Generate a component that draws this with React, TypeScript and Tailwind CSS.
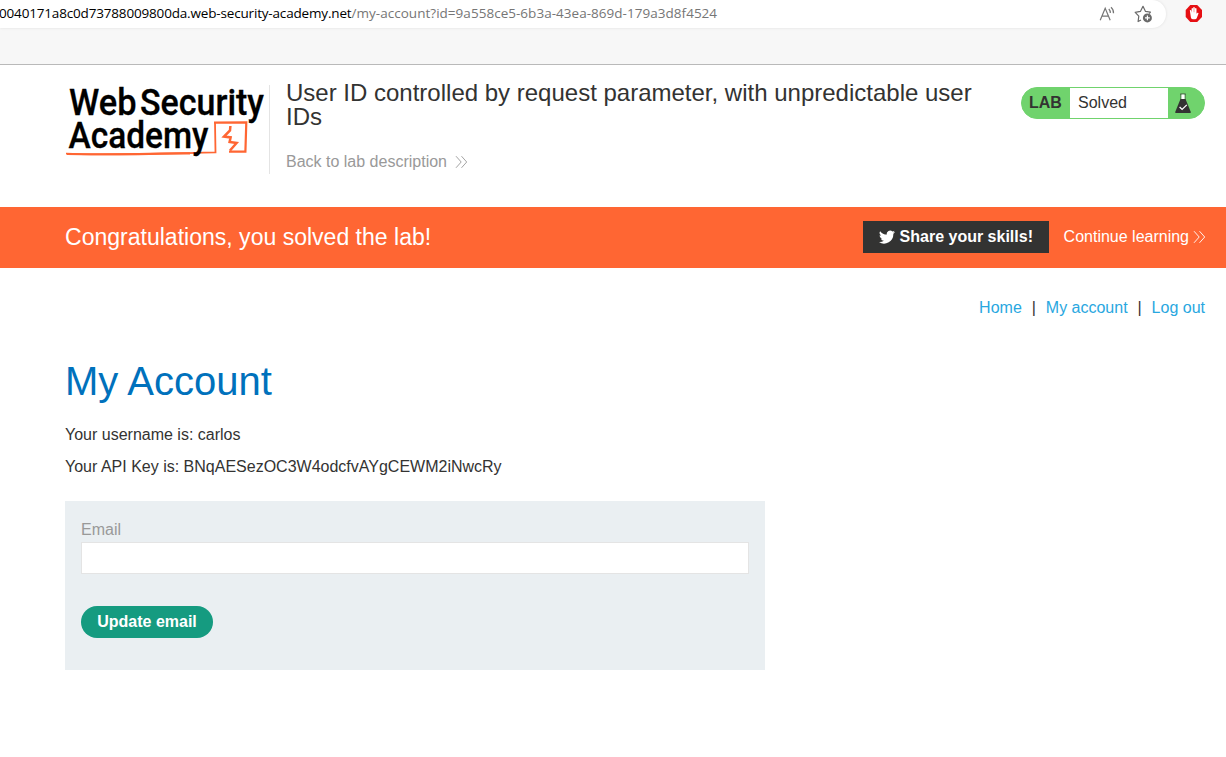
import React from "react";

function Chevrons({ className }: { className: string }) {
  return (
    <svg className={className} width="13" height="14" viewBox="0 0 13 14" fill="none" stroke="currentColor" strokeWidth="0.9">
      <path d="M1 1.2 6.2 7 1 12.8M6.5 1.2 11.7 7 6.5 12.8" />
    </svg>
  );
}

function Logo() {
  return (
    <svg className="block overflow-visible" width="205" height="80" viewBox="65 85 205 80" fontFamily="Roboto, sans-serif" fontWeight="500" fontSize="37.5">
      <g fill="none" stroke="#ff6633">
        <path d="M66 153.6 C100 155.6 160 153.6 215.5 152.4 L215 122.4" strokeWidth="1.8" />
        <path d="M67 154 C110 154.8 150 154 190 153.3" strokeWidth="2.2" />
        <path d="M214 122.6 L246.3 122.4 L245.4 151.6 L229 151.6" strokeWidth="2.2" />
        <path d="M230.4 126 L230 130.5 L224 136.6 L230.6 137.4 L229.6 142 L236.6 143 L230 150.5" strokeWidth="2.5" />
      </g>
      <g fill="#000" stroke="#000" strokeWidth="0.3">
        <text x="69" y="115.2" textLength="67.5" lengthAdjust="spacingAndGlyphs">Web</text>
        <text x="140" y="115.2" textLength="124" lengthAdjust="spacingAndGlyphs">Security</text>
        <text x="68.5" y="148" textLength="140" lengthAdjust="spacingAndGlyphs">Academy</text>
      </g>
    </svg>
  );
}

function BrowserBar() {
  return (
    <div className="flex h-[65px] items-start border-b border-[#b9b9b9] bg-[#f7f7f7]">
      <div className="flex h-7 w-[1166px] items-center rounded-br-[14px] rounded-tr-[14px] bg-white shadow-[0_0_3px_rgba(0,0,0,0.1)]">
        <div className="-ml-px mt-[-2px] w-[1100px] whitespace-nowrap font-['Open_Sans','Noto_Sans',sans-serif] text-[13.5px] leading-[26px] text-[#767676]">
          <span className="inline-block tracking-[-0.17px] text-black">0040171a8c0d73788009800da.web-security-academy.net</span>
          <span className="inline-block tracking-[0.03px]">/my-account?id=9a558ce5-6b3a-43ea-869d-179a3d8f4524</span>
        </div>
        <svg className="-mt-px shrink-0" width="17" height="18" viewBox="0 0 17 18" fill="none" stroke="#767676" strokeWidth="1.2">
          <path d="M1.2 15.2 6.2 3.2l5 12M3 11.2h6.4M9.8 4q1.6 1.6 1.5 4M12 2.3q2.8 2.4 2.5 6" />
        </svg>
        <svg className="-mt-px ml-[18px] shrink-0" width="20" height="20" viewBox="0 0 20 20" fill="none" stroke="#696969" strokeWidth="1.2" strokeLinejoin="round">
          <path d="M7 16 4.1 17.5 4.8 12.1 1.2 8.3 6.4 7.4 9 2.3 11.5 7.4 16.4 8.1 15.2 9.6" />
          <circle cx="13.4" cy="13.9" r="4.5" fill="#696969" stroke="none" />
          <path d="M13.4 11.5v4.8M11 13.9h4.8" stroke="white" />
        </svg>
      </div>
      <svg className="ml-[19px] mt-[5px]" width="18" height="17" viewBox="0 0 18 17">
        <path d="M5.3 0h6.9L17 5v7l-4.8 5H5.3L.7 12V5Z" fill="#e60f13" />
        <path d="M4.8 5.2q.9-.7 1.4.2l.4 2.3V3.5q.7-1.1 1.4 0v3.8h.2V2.5q.8-1.2 1.6 0v4.8h.2V3.5q.8-1 1.5 0v5.2l1-1q1.1-.2 1 .8l-1.7 4.5q-.5 1.3-1.8 1.3H7.8q-1.7 0-1.9-1.8Z" fill="white" />
      </svg>
    </div>
  );
}

export default function App() {
  return (
    <div className="h-[757px] w-[1226px] overflow-hidden bg-white font-['Liberation_Sans',Arial,sans-serif] text-base text-[#333332]">
      <BrowserBar />
      <header className="flex h-[142px] pl-[65px] pr-[21px] pt-5">
        <div className="h-[89px] w-[205px] shrink-0 border-r border-[#e4e4e4]">
          <Logo />
        </div>
        <div className="ml-4 w-[700px] shrink-0">
          <h2 className="mt-[-4px] text-[24px] leading-6">User ID controlled by request parameter, with unpredictable user IDs</h2>
          <a className="mt-[21px] flex items-center text-[#999]">
            Back to lab description
            <Chevrons className="ml-2" />
          </a>
        </div>
        <div className="ml-auto mt-[2px] flex h-8 w-[184px] overflow-hidden rounded-full border border-[#70d36d] bg-[#70d36d] leading-[30px]">
          <span className="w-12 pl-[7px] font-bold">LAB</span>
          <span className="w-[98px] bg-white pl-2">Solved</span>
          <svg className="ml-[6px] mt-[5px]" width="18" height="21" viewBox="0 0 18 21">
            <path d="M6.3 1h5.4M7 1v6M11 1v6" stroke="#333332" strokeWidth="0.8" />
            <path d="M7.4 1.5h3.2V6H7.4Z" fill="white" />
            <path d="M6.5 6h5l5.3 13q.3 1-.8 1H2q-1.1 0-.8-1Z" fill="#333332" />
            <path d="m5.6 14 2.5 2.4 4.7-4.5" fill="none" stroke="white" strokeWidth="1.3" />
          </svg>
        </div>
      </header>
      <section className="flex h-[61px] items-center bg-[#ff6633] pb-[2px] pl-[65px] pr-5 text-white">
        <h4 className="text-[23.04px] leading-6">Congratulations, you solved the lab!</h4>
        <button className="ml-auto flex h-8 w-[186px] items-center bg-[#333332] pl-4 font-bold">
          <svg width="16" height="16" viewBox="0 0 24 24" fill="white">
            <path d="M24 4.6a10 10 0 0 1-2.8.8 5 5 0 0 0 2.1-2.7 10 10 0 0 1-3.1 1.2A4.9 4.9 0 0 0 11.8 8.4 14 14 0 0 1 1.7 3.2a4.9 4.9 0 0 0 1.5 6.6A5 5 0 0 1 1 9.2a4.9 4.9 0 0 0 4 4.9 5 5 0 0 1-2.3.1 4.9 4.9 0 0 0 4.6 3.4A10 10 0 0 1 0 19.6 14 14 0 0 0 21.5 7.1 10 10 0 0 0 24 4.6Z" />
          </svg>
          <span className="ml-[5px]">Share your skills!</span>
        </button>
        <a className="ml-[15px] flex items-center">
          Continue learning
          <Chevrons className="ml-1" />
        </a>
      </section>
      <nav className="flex h-[79px] justify-end pr-[21px] pt-7 leading-6 text-[#29a7df]">
        <a>Home</a>
        <span className="w-6 text-center text-[#333332]">|</span>
        <a>My account</a>
        <span className="w-6 text-center text-[#333332]">|</span>
        <a>Log out</a>
      </nav>
      <main className="pl-[65px]">
        <h1 className="pt-[10px] text-[40px] leading-[48px] text-[#0071bc]">My Account</h1>
        <p className="mt-[18px] leading-6">Your username is: carlos</p>
        <p className="mt-2 leading-6">Your API Key is: BNqAESezOC3W4odcfvAYgCEWM2iNwcRy</p>
        <form className="mt-[22px] h-[169px] w-[700px] bg-[#eaeff2] px-4 pt-4">
          <label className="block leading-[25px] text-[#999]">Email</label>
          <input className="block h-8 w-[668px] border border-[#e4e4e4] bg-white px-2 outline-none" />
          <button type="button" className="mt-8 block h-8 w-[132px] rounded-full bg-[#159b80] font-bold text-white">Update email</button>
        </form>
      </main>
    </div>
  );
}
